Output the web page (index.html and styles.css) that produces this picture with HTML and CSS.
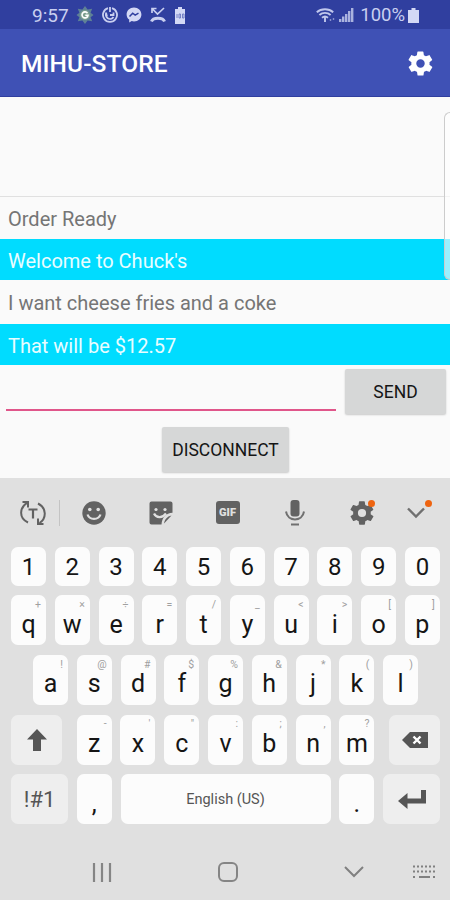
FILE: index.html
```html
<!DOCTYPE html>
<html lang="en">
<head>
  <meta charset="UTF-8">
  <meta name="viewport" content="width=device-width, initial-scale=1.0">
  <title>MIHU-STORE</title>
  <link rel="stylesheet" href="styles.css">
</head>
<body>
  <svg width="0" height="0" class="defs">
    <symbol id="gear" viewBox="0 0 24 24">
      <path fill-rule="evenodd" d="M19.4 13c.1-.3.1-.7.1-1s0-.7-.1-1l2.1-1.6c.2-.2.3-.4.1-.7l-2-3.4c-.1-.2-.4-.3-.6-.2l-2.5 1c-.5-.4-1.1-.7-1.7-1l-.4-2.6c0-.3-.2-.5-.5-.5h-4c-.3 0-.5.2-.5.5L9 5.1c-.6.3-1.2.6-1.7 1l-2.5-1c-.2-.1-.5 0-.6.2l-2 3.4c-.1.3-.1.5.1.7L4.5 11c0 .3-.1.7-.1 1s0 .7.1 1l-2.1 1.6c-.2.2-.3.4-.1.7l2 3.4c.1.2.4.3.6.2l2.5-1c.5.4 1.1.7 1.7 1l.4 2.6c0 .3.2.5.5.5h4c.3 0 .5-.2.5-.5l.4-2.6c.6-.3 1.2-.6 1.7-1l2.5 1c.2.1.5 0 .6-.2l2-3.4c.1-.3.1-.5-.1-.7zM12 15.5a3.500 3.500 0 1 1 0-7 3.500 3.500 0 0 1 0 7z"/>
    </symbol>
  </svg>

  <div class="status-bar">
    <span class="clock">9:57</span>
    <div class="notifications">
      <svg width="18" height="18" viewBox="0 0 18 18">
        <path d="M9 0l2.6 3.4 4.6-.6-1.6 4L17.5 9l-2.9 2.2 1.6 4-4.6-.6L9 18l-2.6-3.4-4.600.6 1.600-4L.5 9l2.900-2.200-1.600-4 4.600.6z" fill="#5f8296"/>
        <circle cx="9" cy="9" r="5" fill="#7da08f"/>
        <path d="M11.500 7.200A3 3 0 1 0 12 9.300H9.300" fill="none" stroke="#fff" stroke-width="1.600"/>
      </svg>
      <svg width="16" height="16" viewBox="0 0 16 16" fill="none" stroke="#c9cff0" stroke-width="1.800">
        <path d="M6 1.200a7 7 0 1 0 4 0M8 0v5"/>
        <path d="M4.500 5.500a4 4 0 0 0 7 4.500M5 9.500L4 6M8 8h3.500V5.500"/>
      </svg>
      <svg width="16" height="16" viewBox="0 0 16 16">
        <path d="M8 .5C3.800.5.6 3.500.6 7.400c0 2.200 1 4 2.600 5.200v2.900l2.500-1.400c.7.2 1.500.3 2.300.3 4.200 0 7.400-3 7.400-7S12.200.5 8 .5z" fill="#d3d8f5"/>
        <path d="M3.500 9.500l3.200-3.300 2.500 2 3.300-2" fill="none" stroke="#303f9f" stroke-width="1.500"/>
      </svg>
      <svg width="16" height="16" viewBox="0 0 16 16" fill="none" stroke="#c9cff0">
        <path d="M2 6V1.500h4.500M2.500 2l5 5L14 1" stroke-width="1.700"/>
        <path d="M1.500 14.500c1.500-4.500 11.500-4.500 13 0" stroke-width="3"/>
      </svg>
      <svg width="12" height="17" viewBox="0 0 12 17">
        <path d="M4 0h4v2h3v15H1V2h3z" fill="#d3d8f5"/>
        <path d="M3 7v4M5 7h1.500v4H5zM8.500 7H10v4H8.500z" fill="none" stroke="#606dba" stroke-width=".8"/>
      </svg>
    </div>
    <div class="signals">
      <svg width="19" height="15" viewBox="0 0 19 15" fill="none" stroke="#c0c7ec" stroke-width="1.900">
        <path d="M.8 4.200c4.400-4 12-4 16.400 0M3.400 7c3.200-2.800 8-2.800 11.200 0M6 9.700c1.800-1.500 4.200-1.500 6 0M9 9v5"/>
        <path d="M14.500 11v2M17.500 10v2" stroke-width="1.400" opacity=".6"/>
      </svg>
      <svg width="15" height="14" viewBox="0 0 15 14" fill="#aab3df">
        <path d="M0 11h2.400v3H0zM3 8.500h2.400V14H3zM6 6h2.400v8H6zM9 3h2.400v11H9zM12 0h2.400v14H12z"/>
      </svg>
      <span class="percent">100%</span>
      <svg width="11" height="15" viewBox="0 0 11 15"><path d="M3.500 0h4v2H11v13H0V2h3.500z" fill="#d3d8f5"/></svg>
    </div>
  </div>

  <header class="app-bar">
    <h1>MIHU-STORE</h1>
    <svg class="settings" width="29" height="29"><use href="#gear"/></svg>
  </header>

  <main class="chat">
    <div class="edge-handle"></div>
    <div class="spacer"></div>
    <ul class="messages">
      <li>Order Ready</li>
      <li class="mine">Welcome to Chuck's</li>
      <li>I want cheese fries and a coke</li>
      <li class="mine">That will be $12.57</li>
    </ul>
    <div class="compose">
      <input type="text" class="message-input" aria-label="Message">
      <button class="btn btn-send">SEND</button>
    </div>
    <button class="btn btn-disconnect">DISCONNECT</button>
  </main>

  <section class="keyboard">
    <div class="toolbar">
      <div class="tool tool-first">
        <svg width="28" height="28" viewBox="0 0 28 28" fill="none" stroke="#626262" stroke-width="2">
          <path d="M9 23.500C-.5 19 .5 8.500 8 4M19 4.500c9 4.500 8.500 15 1.500 19.500"/>
          <path d="M3.500 3h5.500v5.500M24.500 25H19v-5.500"/>
          <path d="M9.500 10.500h9M14 10.500v9" stroke-width="2.200"/>
        </svg>
      </div>
      <div class="tool">
        <svg width="24" height="24" viewBox="0 0 24 24">
          <circle cx="12" cy="12" r="11.700" fill="#626262"/>
          <circle cx="7.800" cy="8.500" r="1.800" fill="#e0e0e0"/><circle cx="16.200" cy="8.500" r="1.800" fill="#e0e0e0"/>
          <path d="M5.500 13.500c2 5.800 11 5.800 13 0" fill="none" stroke="#e0e0e0" stroke-width="2.200"/>
        </svg>
      </div>
      <div class="tool">
        <svg width="24" height="24" viewBox="0 0 24 24">
          <path d="M2.500.5h19a2 2 0 0 1 2 2v9.200c-6.500.3-10.500 4.800-11 11.800h-10a2 2 0 0 1-2-2v-19a2 2 0 0 1 2-2z" fill="#626262"/>
          <path d="M15 22.500c.5-4 3-7 7.500-8z" fill="#626262"/>
          <circle cx="7" cy="8.500" r="1.600" fill="#e0e0e0"/><circle cx="16" cy="8.500" r="1.600" fill="#e0e0e0"/>
          <path d="M5 12.500c2 4.500 8.500 5 12 0" fill="none" stroke="#e0e0e0" stroke-width="2.200"/>
        </svg>
      </div>
      <div class="tool"><span class="gif">GIF</span></div>
      <div class="tool">
        <svg width="22" height="26" viewBox="0 0 22 26" fill="none" stroke="#707070" stroke-width="2">
          <rect x="6.500" y="0" width="9" height="16.500" rx="3" fill="#626262" stroke="none"/>
          <path d="M2 11.500c1.500 10.500 16.500 10.500 18 0"/><path d="M7 24.500h8"/>
        </svg>
      </div>
      <div class="tool">
        <span class="badged"><svg width="28" height="28" fill="#626262"><use href="#gear"/></svg><i class="dot"></i></span>
      </div>
      <div class="tool tool-last">
        <span class="badged badged-arrow"><svg width="18" height="12" viewBox="0 0 18 12" fill="none" stroke="#707070" stroke-width="2.400"><path d="M1 1.500l8 8 8-8"/></svg><i class="dot"></i></span>
      </div>
    </div>

    <div class="row row-digits">
      <span class="key">1</span><span class="key">2</span><span class="key">3</span><span class="key">4</span><span class="key">5</span><span class="key">6</span><span class="key">7</span><span class="key">8</span><span class="key">9</span><span class="key">0</span>
    </div>
    <div class="row">
      <span class="key">q<sup>+</sup></span><span class="key">w<sup>×</sup></span><span class="key">e<sup>÷</sup></span><span class="key">r<sup>=</sup></span><span class="key">t<sup>/</sup></span><span class="key">y<sup>_</sup></span><span class="key">u<sup>&lt;</sup></span><span class="key">i<sup>&gt;</sup></span><span class="key">o<sup>[</sup></span><span class="key">p<sup>]</sup></span>
    </div>
    <div class="row row-home">
      <span class="key">a<sup>!</sup></span><span class="key">s<sup>@</sup></span><span class="key">d<sup>#</sup></span><span class="key">f<sup>$</sup></span><span class="key">g<sup>%</sup></span><span class="key">h<sup>&amp;</sup></span><span class="key">j<sup>*</sup></span><span class="key">k<sup>(</sup></span><span class="key">l<sup>)</sup></span>
    </div>
    <div class="row row-shift">
      <span class="key key-fn">
        <svg width="20" height="22" viewBox="0 0 20 22" fill="#555"><path d="M10 0l10 10.500h-6V22H6V10.500H0z"/></svg>
      </span>
      <div class="letters">
        <span class="key">z<sup>-</sup></span><span class="key">x<sup>'</sup></span><span class="key">c<sup>"</sup></span><span class="key">v<sup>:</sup></span><span class="key">b<sup>;</sup></span><span class="key">n<sup>,</sup></span><span class="key">m<sup>?</sup></span>
      </div>
      <span class="key key-fn">
        <svg width="26" height="16" viewBox="0 0 26 16"><path d="M8 0h18v16H8L0 8z" fill="#555"/><path d="M11.500 4.500l7 7M18.500 4.500l-7 7" stroke="#fff" stroke-width="2.400"/></svg>
      </span>
    </div>
    <div class="row row-bottom">
      <span class="key key-fn key-sym">!#1</span>
      <span class="key">,</span>
      <span class="key key-space">English (US)</span>
      <span class="key">.</span>
      <span class="key key-fn key-enter">
        <svg width="28" height="19" viewBox="0 0 28 19" fill="#555"><path d="M23 0h5v13.500H9.500V19L0 11l9.500-8v5.500H23z"/></svg>
      </span>
    </div>
  </section>

  <nav class="nav-bar">
    <svg width="20" height="19" viewBox="0 0 20 19" stroke="#858585" stroke-width="2.200"><path d="M2 0v19M10 0v19M18 0v19"/></svg>
    <svg width="20" height="20" viewBox="0 0 20 20"><rect x="1" y="1" width="18" height="18" rx="5" fill="none" stroke="#858585" stroke-width="2"/></svg>
    <svg width="20" height="12" viewBox="0 0 20 12" fill="none" stroke="#808080" stroke-width="2"><path d="M1 1l9 9 9-9"/></svg>
    <svg width="24" height="14" viewBox="0 0 24 14" fill="none" stroke="#808080" stroke-width="2"><path d="M1 1.500h22M1 6.500h22" stroke-dasharray="2 2"/><path d="M1 12h2M7 12h11M21 12h2"/></svg>
  </nav>
</body>
</html>
```
FILE: styles.css
```css
* {
  box-sizing: border-box;
}

body {
  margin: 0;
  width: 450px;
  height: 900px;
  overflow: hidden;
  background: #fafafa;
  font-family: Roboto, "Liberation Sans", sans-serif;
}

svg {
  display: block;
  flex: none;
}

.defs {
  position: absolute;
}

.status-bar {
  display: flex;
  align-items: center;
  height: 29px;
  padding: 1px 31px 0 32px;
  background: #303f9f;
  color: #c9cff0;
  font-size: 19px;
}

.clock {
  width: 44px;
}

.notifications {
  display: flex;
  align-items: center;
  gap: 8px;
}

.notifications svg:last-child {
  margin-left: 0;
}

.signals {
  display: flex;
  align-items: center;
  margin-left: auto;
}

.signals svg:first-child {
  margin-right: 4px;
}

.percent {
  margin: 0 3px 0 6px;
  font-size: 18.5px;
}

.app-bar {
  display: flex;
  align-items: center;
  justify-content: space-between;
  height: 68px;
  padding: 2px 15px 0 21px;
  background: #3f51b5;
  border-bottom: 1px solid #303f9f;
  color: #fff;
}

.app-bar h1 {
  margin: 0;
  font-size: 24.5px;
  font-weight: 500;
  letter-spacing: 0.1px;
}

.settings {
  fill: #fff;
}

.chat {
  position: relative;
  height: 381px;
}

.spacer {
  height: 100px;
  border-bottom: 1px solid #e0e0e0;
}

/* edge panel handle sits over the list */
.edge-handle {
  position: absolute;
  top: 15px;
  right: 0;
  width: 6px;
  height: 168px;
  border: 1px solid #ccc;
  border-right: 0;
  border-radius: 6px 0 0 6px;
  background: rgba(255, 255, 255, 0.6);
}

.messages {
  margin: 0;
  padding: 0;
  list-style: none;
}

.messages li {
  height: 42px;
  padding-left: 8px;
  line-height: 45px;
  font-size: 20px;
  color: #757575;
}

.messages li:nth-child(3) {
  height: 43px;
}

.messages .mine {
  height: 41px;
  margin-bottom: 1px;
  background: #00dcff;
  color: #e8fdff;
}

.messages .mine:last-child {
  line-height: 44px;
}

.compose {
  display: flex;
  justify-content: space-between;
  padding: 3px 4px 0 6px;
}

.message-input {
  width: 330px;
  height: 42px;
  padding: 0;
  border: 0;
  border-bottom: 2px solid #e0568a;
  background: transparent;
  font: inherit;
  outline: none;
}

.btn {
  display: block;
  height: 45px;
  padding: 0;
  border: 0;
  border-radius: 2px;
  background: #d6d7d7;
  box-shadow: 0 1px 2px rgba(0, 0, 0, 0.2);
  color: #151515;
  font-family: inherit;
  font-size: 17.5px;
  font-weight: 400;
  text-align: center;
}

.btn-send {
  width: 101px;
}

.btn-disconnect {
  width: 127px;
  margin: 13px 0 0 162px;
}

.keyboard {
  height: 366px;
  padding: 0 10px 0 11px;
  background: #e0e0e0;
}

.toolbar {
  display: flex;
  height: 69px;
  margin: 0 -5px;
}

.tool {
  display: flex;
  align-items: center;
  justify-content: center;
  width: 67px;
}

.tool-first {
  width: 54px;
  background: linear-gradient(#c4c4c4, #c4c4c4) right center / 1px 26px no-repeat;
}

.tool-last {
  width: 41px;
}

.gif {
  width: 24px;
  border-radius: 3px;
  background: #626262;
  color: #e0e0e0;
  font-size: 11px;
  font-weight: 900;
  line-height: 23px;
  text-align: center;
}

.badged {
  position: relative;
}

.dot {
  position: absolute;
  top: 1px;
  right: 1px;
  width: 7px;
  height: 7px;
  border-radius: 50%;
  background: #ee6410;
}

.badged-arrow .dot {
  top: -7px;
  right: -7px;
}

.row {
  display: flex;
  justify-content: space-between;
  height: 50px;
  margin-bottom: 9.6px;
}

.row-digits {
  height: 39px;
  margin-bottom: 9.4px;
}

.row-home {
  padding: 0 22px;
}

.row-bottom {
  margin-bottom: 0;
}

.letters {
  display: flex;
  gap: 8.8px;
}

.key {
  position: relative;
  display: flex;
  align-items: center;
  justify-content: center;
  width: 35px;
  padding-top: 8px;
  border-radius: 7px;
  background: #fcfcfc;
  color: #151515;
  font-size: 25px;
}

.row-digits .key {
  padding-top: 1px;
  font-size: 24px;
}

.key sup {
  position: absolute;
  top: 4px;
  right: 5px;
  color: #a0a0a0;
  font-size: 10.5px;
  line-height: 12px;
}

.row-shift .key {
  line-height: 24px;
}

.row-shift .key sup {
  top: 3px;
  line-height: 12px;
}

.row .key-fn {
  width: 51px;
  padding-top: 0;
  background: #eee;
}

.row .key-sym {
  width: 57px;
  color: #555;
  font-size: 22px;
}

.row .key-enter {
  width: 57px;
}

.key-space {
  width: 210px;
  padding-top: 1px;
  color: #555;
  font-size: 14.5px;
}

.nav-bar {
  display: grid;
  grid-template-columns: 126px 126px 126px 14px;
  align-items: center;
  justify-items: center;
  height: 56px;
  padding-left: 39px;
  background: #e0e0e0;
}
```
